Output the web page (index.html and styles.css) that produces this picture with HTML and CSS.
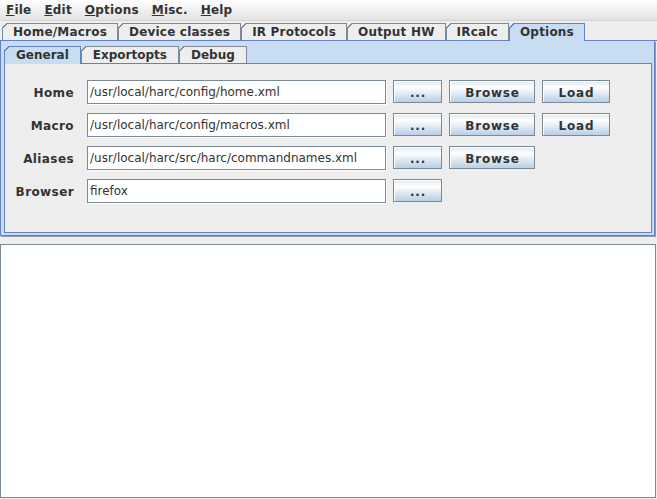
FILE: index.html
```html
<!DOCTYPE html>
<html>
<head>
    <link rel="stylesheet" href="styles.css">
</head>
<body>
    <div class="menubar">
        <span class="menu"><u>F</u>ile</span>
        <span class="menu"><u>E</u>dit</span>
        <span class="menu"><u>O</u>ptions</span>
        <span class="menu"><u>M</u>isc.</span>
        <span class="menu"><u>H</u>elp</span>
    </div>

    <div class="main-tabs tabs">
        <div class="tab">Home/Macros</div>
        <div class="tab">Device classes</div>
        <div class="tab">IR Protocols</div>
        <div class="tab">Output HW</div>
        <div class="tab">IRcalc</div>
        <div class="tab selected">Options</div>
    </div>

    <div class="pane">
        <div class="sub-tabs tabs">
            <div class="tab selected">General</div>
            <div class="tab">Exportopts</div>
            <div class="tab">Debug</div>
        </div>

        <div class="sub-pane">
            <div class="form">
                <label class="field-label">Home</label>
                <input class="field" type="text" value="/usr/local/harc/config/home.xml">
                <button class="btn">...</button>
                <button class="btn">Browse</button>
                <button class="btn">Load</button>

                <label class="field-label">Macro</label>
                <input class="field" type="text" value="/usr/local/harc/config/macros.xml">
                <button class="btn">...</button>
                <button class="btn">Browse</button>
                <button class="btn">Load</button>

                <label class="field-label">Aliases</label>
                <input class="field" type="text" value="/usr/local/harc/src/harc/commandnames.xml">
                <button class="btn">...</button>
                <button class="btn">Browse</button>
                <span></span>

                <label class="field-label">Browser</label>
                <input class="field" type="text" value="firefox">
                <button class="btn">...</button>
                <span></span>
                <span></span>
            </div>
        </div>
    </div>

    <div class="output"></div>
</body>
</html>
```

FILE: styles.css
```css
body {
    margin: 0;
    background-color: #eeeeee;
    font-family: 'DejaVu Sans', sans-serif;
    font-size: 12px;
    font-weight: bold;
    color: #333333;
    width: 657px;
    height: 499px;
    overflow: hidden;
}

/* Menu bar */
.menubar {
    display: flex;
    height: 20px;
    align-items: center;
    gap: 1px;
    background: linear-gradient(#ffffff, #e2e2e2);
    border-bottom: 1px solid #d4d4d4;
}
.menu {
    padding: 0 6px;
    letter-spacing: 0.2px;
}

/* Tabs (shared) */
.tabs {
    display: flex;
    align-items: flex-start;
    height: 18px;
    box-shadow: inset 0 -1px 0 #6382bf;
    --behind: #eeeeee;
}
.tab {
    position: relative;
    box-sizing: border-box;
    height: 17px;
    line-height: 16px;
    padding: 0 10px;
    border: 1px solid #7a8a99;
    border-bottom: none;
    background-color: #eeeeee;
    white-space: nowrap;
}
.tab::before {
    content: '';
    position: absolute;
    top: -1px;
    left: -1px;
    width: 6px;
    height: 6px;
    background: linear-gradient(135deg, var(--behind) 0 40%, #7a8a99 40% 58%, transparent 58%);
}
.tab.selected {
    height: 18px;
    background-color: #c8ddf2;
    border-color: #6382bf;
}
.tab.selected::before {
    background: linear-gradient(135deg, var(--behind) 0 40%, #6382bf 40% 58%, transparent 58%);
}

.main-tabs {
    margin-top: 2px;
    padding-left: 2px;
    width: 655px;
}
.main-tabs .tab {
    letter-spacing: 0.2px;
}

/* Outer pane */
.pane {
    box-sizing: border-box;
    width: 655px;
    padding: 5px 2px 2px 3px;
    background-color: #c8ddf2;
    border: 1px solid #6382bf;
    border-top: none;
    box-shadow: 1px 1px 0 #8c9aa8;
}
.sub-tabs {
    --behind: #c8ddf2;
}
.sub-tabs .tab {
    padding: 0 11px;
}

.sub-pane {
    background-color: #eeeeee;
    border: 1px solid #6382bf;
    border-top: none;
    padding: 16px 0 29px 0;
}

/* Settings form */
.form {
    display: grid;
    grid-template-columns: 75px 299px 49px 86px 68px;
    grid-auto-rows: 24px;
    column-gap: 7px;
    row-gap: 9px;
    align-items: center;
}
.field-label {
    text-align: right;
    padding-right: 6px;
    padding-top: 1px;
    letter-spacing: 0.4px;
}
.field {
    box-sizing: border-box;
    height: 24px;
    margin: 0;
    padding: 0 2px;
    border: 1px solid #7a8a99;
    box-shadow: 1px 1px 0 #ffffff;
    background-color: #ffffff;
    font-family: 'DejaVu Sans', sans-serif;
    font-size: 12px;
    color: #333333;
}
.btn {
    align-self: start;
    box-sizing: border-box;
    height: 23px;
    margin: 0;
    padding: 2px 0 0 1px;
    border: 1px solid #7a8a99;
    box-shadow: inset 1px 1px 0 #ffffff;
    background: linear-gradient(#dde8f3, #ffffff 30%, #b8cfe5);
    font-family: 'DejaVu Sans', sans-serif;
    font-size: 12px;
    font-weight: bold;
    letter-spacing: 0.8px;
    color: #333333;
}

/* Output area */
.output {
    box-sizing: border-box;
    width: 656px;
    height: 254px;
    margin-top: 8px;
    background-color: #ffffff;
    border: 1px solid #7a8a99;
}
```
